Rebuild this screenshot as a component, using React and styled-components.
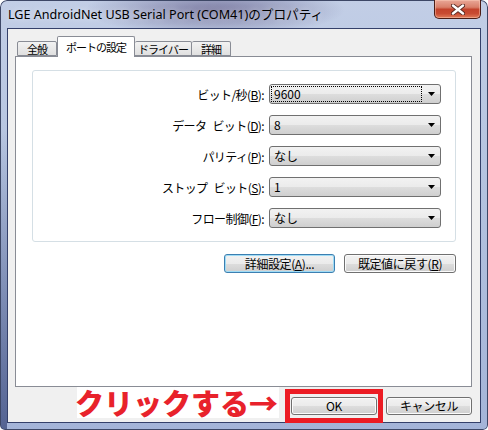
import React from 'react';
import styled, { createGlobalStyle } from 'styled-components';

const GlobalStyle = createGlobalStyle`
  html, body {
    margin: 0;
    padding: 0;
    background: #ffffff;
  }
  body {
    font-family: "Noto Sans CJK JP", "Noto Sans", sans-serif;
    font-size: 12px;
    color: #000;
  }
`;

const tabs = [
    { label: '全般', width: 40 },
    { label: 'ポートの設定', width: 78, active: true },
    { label: 'ドライバー', width: 57 },
    { label: '詳細', width: 39 },
];

const settings = [
    { label: 'ビット/秒', key: 'B', value: '9600', focused: true },
    { label: 'データ ビット', key: 'D', value: '8' },
    { label: 'パリティ', key: 'P', value: 'なし' },
    { label: 'ストップ ビット', key: 'S', value: '1' },
    { label: 'フロー制御', key: 'F', value: 'なし' },
];

const CloseGlyph = () => (
    <svg width="14" height="11" viewBox="0 0 14 11">
        <path d="M2 1.5 L12 9.5 M12 1.5 L2 9.5" stroke="#5a2a22" strokeWidth="4.2" strokeLinecap="round" />
        <path d="M2 1.5 L12 9.5 M12 1.5 L2 9.5" stroke="#ffffff" strokeWidth="2.4" strokeLinecap="round" />
    </svg>
);

const DropArrow = () => (
    <svg width="7" height="4" viewBox="0 0 7 4">
        <polygon points="0,0 7,0 3.5,4" fill="#000" />
    </svg>
);

const App = () => {
    return (
        <>
            <GlobalStyle />
            <Window>
                <TitleBar>
                    <Title>LGE AndroidNet USB Serial Port (COM41)のプロパティ</Title>
                    <CloseButton>
                        <CloseGlyph />
                    </CloseButton>
                </TitleBar>
                <Client>
                    <TabStrip>
                        {tabs.map((t) => (
                            <Tab key={t.label} $width={t.width} $active={t.active}>
                                {t.label}
                            </Tab>
                        ))}
                    </TabStrip>
                    <TabPanel>
                        <GroupBox>
                            {settings.map((s) => (
                                <React.Fragment key={s.key}>
                                    <FieldLabel>
                                        {s.label}(<u>{s.key}</u>):
                                    </FieldLabel>
                                    <Combo>
                                        <ComboValue $focused={s.focused}>{s.value}</ComboValue>
                                        <ComboArrow>
                                            <DropArrow />
                                        </ComboArrow>
                                    </Combo>
                                </React.Fragment>
                            ))}
                        </GroupBox>
                        <ButtonRow>
                            <PushButton $w={111} $default>
                                詳細設定(<u>A</u>)...
                            </PushButton>
                            <PushButton $w={112}>
                                既定値に戻す(<u>R</u>)
                            </PushButton>
                        </ButtonRow>
                    </TabPanel>
                    <Footer>
                        <Annotation>クリックする→</Annotation>
                        <Highlight>
                            <PushButton $w={86} $h={18}>OK</PushButton>
                        </Highlight>
                        <CancelSlot>
                            <PushButton $w={86} $h={18}>キャンセル</PushButton>
                        </CancelSlot>
                    </Footer>
                </Client>
            </Window>
        </>
    );
};

export default App;

// STYLED COMPONENTS:

const Window = styled.div`
    width: 488px;
    height: 430px;
    box-sizing: border-box;
    display: flex;
    flex-direction: column;
    padding: 0 7px 7px 7px;
    border-radius: 7px 7px 5px 5px;
    overflow: hidden;
    background:
        radial-gradient(ellipse 130px 26px at 215px 10px, rgba(70, 60, 110, 0.55), transparent),
        linear-gradient(to bottom, transparent 30%, rgba(30, 45, 100, 0.6) 100%) left / 7px 100% no-repeat,
        linear-gradient(to bottom, #c2cee6 0%, #b3c2df 45%, #a4b4d8 100%);
    box-shadow: inset 0 0 0 1px #3d4766;
`;

const TitleBar = styled.div`
    height: 28px;
    display: flex;
    align-items: flex-start;
`;

const Title = styled.div`
    padding: 7px 0 0 1px;
    font-family: "Noto Sans", "Noto Sans CJK JP", sans-serif;
    font-size: 12.6px;
    line-height: 16px;
    color: #000;
    white-space: nowrap;
    text-shadow: 0 0 6px rgba(255, 255, 255, 0.7);
`;

const CloseButton = styled.div`
    margin-left: auto;
    width: 47px;
    height: 19px;
    box-sizing: border-box;
    display: flex;
    align-items: center;
    justify-content: center;
    border: 1px solid #4b1d16;
    border-top: none;
    border-radius: 0 0 5px 5px;
    background: linear-gradient(to bottom, #e9a797 0%, #d9806a 40%, #c3432c 52%, #c84b32 75%, #e07c5a 100%);
    box-shadow: inset 0 0 0 1px rgba(255, 210, 190, 0.45);
`;

const Client = styled.div`
    flex: 1;
    display: flex;
    flex-direction: column;
    padding: 7px 8px 0 7px;
    background: #f0f0f0;
    border: 1px solid #34406a;
`;

const TabStrip = styled.div`
    height: 20px;
    display: flex;
    align-items: flex-end;
    padding-left: 2px;
    position: relative;
    z-index: 1;
`;

const Tab = styled.div`
    box-sizing: border-box;
    width: ${(p) => p.$width}px;
    height: ${(p) => (p.$active ? 21 : 15)}px;
    margin-bottom: ${(p) => (p.$active ? -1 : 0)}px;
    display: flex;
    align-items: center;
    justify-content: center;
    border: 1px solid #898c95;
    border-bottom: ${(p) => (p.$active ? 'none' : '1px solid #898c95')};
    border-left: ${(p) => (p.$active ? '1px solid #898c95' : 'none')};
    border-radius: 2px 2px 0 0;
    background: ${(p) => (p.$active ? '#ffffff' : 'linear-gradient(to bottom, #f2f2f2, #e0e0e0)')};
    font-size: 11px;
    letter-spacing: -1px;
    line-height: 14px;
    white-space: nowrap;

    &:first-child {
        border-left: 1px solid #898c95;
    }
`;

const TabPanel = styled.div`
    box-sizing: border-box;
    height: 331px;
    padding: 13px 15px 0 16px;
    background: #ffffff;
    border: 1px solid #898c95;
`;

const GroupBox = styled.div`
    box-sizing: border-box;
    height: 172px;
    padding: 13px 14px 0 0;
    border: 1px solid #d5dfe5;
    border-radius: 3px;
    display: grid;
    grid-template-columns: 1fr 172px;
    grid-auto-rows: 20px;
    column-gap: 5px;
    row-gap: 11px;
    align-items: center;
    align-content: start;
`;

const FieldLabel = styled.div`
    text-align: right;
    font-size: 12px;
    letter-spacing: -0.6px;
    word-spacing: 4px;
    white-space: nowrap;
`;

const Combo = styled.div`
    box-sizing: border-box;
    height: 20px;
    display: flex;
    align-items: center;
    padding: 1px;
    border: 1px solid #707070;
    border-radius: 3px;
    background: linear-gradient(to bottom, #f2f2f2 0%, #ebebeb 50%, #dddddd 51%, #cfcfcf 100%);
`;

const ComboValue = styled.div`
    box-sizing: border-box;
    width: 151px;
    height: 16px;
    padding-left: 2px;
    border: 1px dotted ${(p) => (p.$focused ? '#000' : 'transparent')};
    font-size: 12px;
    line-height: 14px;
`;

const ComboArrow = styled.div`
    flex: 1;
    display: flex;
    justify-content: center;
    padding-left: 2px;
`;

const ButtonRow = styled.div`
    margin-top: 12px;
    display: flex;
    justify-content: flex-end;
    gap: 9px;
`;

const PushButton = styled.button`
    box-sizing: border-box;
    width: ${(p) => p.$w}px;
    height: ${(p) => p.$h || 19}px;
    padding: 0;
    border: 1px solid ${(p) => (p.$default ? '#3c7fb1' : '#707070')};
    border-radius: 3px;
    background: linear-gradient(to bottom, #f2f2f2 0%, #ebebeb 50%, #dddddd 51%, #cfcfcf 100%);
    box-shadow: inset 0 0 0 1px ${(p) => (p.$default ? '#9fdcf6' : '#fbfbfb')};
    font-family: "Noto Sans CJK JP", sans-serif;
    font-size: 12px;
    letter-spacing: -0.4px;
    line-height: 14px;
    color: #000;
`;

const Footer = styled.div`
    height: 35px;
    display: flex;
    align-items: flex-start;
    padding-left: 62px;
`;

const Annotation = styled.div`
    box-sizing: border-box;
    width: 210px;
    height: 31px;
    background: #ffffff;
    color: #e8222b;
    font-family: "Noto Sans CJK JP", sans-serif;
    font-weight: 900;
    font-size: 29px;
    line-height: 31px;
    text-indent: -2px;
    white-space: nowrap;
`;

const Highlight = styled.div`
    margin: 2px 0 0 6px;
    padding: 3px 1px;
    border: 5px solid #ec1c24;
    display: flex;
`;

const CancelSlot = styled.div`
    margin: 10px 0 0 3px;
    display: flex;
`;
